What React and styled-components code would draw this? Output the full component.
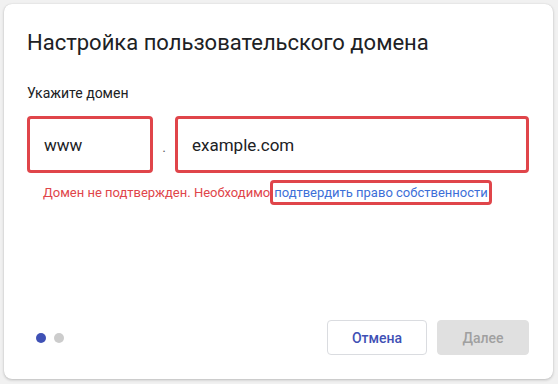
import React from 'react';
import styled, { createGlobalStyle } from 'styled-components';

const GlobalStyle = createGlobalStyle`
  html, body {
    margin: 0;
    padding: 0;
    background: #f1f1f1;
    font-family: Roboto, "Noto Sans", Arial, sans-serif;
  }
  * {
    box-sizing: border-box;
  }
`;

const Page = styled.div`
  width: 558px;
  height: 384px;
  padding: 4px 5px 5px 4px;
`;

const Card = styled.div`
  width: 549px;
  height: 375px;
  background: #fff;
  border-radius: 8px;
  box-shadow: 0 1px 3px rgba(0, 0, 0, 0.22), 0 0 1px rgba(0, 0, 0, 0.12);
  padding: 25px 24px 24px 23px;
  display: flex;
  flex-direction: column;
`;

const Title = styled.h1`
  margin: 0;
  font-size: 22px;
  line-height: 28px;
  font-weight: 400;
  color: #202124;
`;

const Label = styled.div`
  margin-top: 26px;
  font-size: 14px;
  line-height: 20px;
  color: #202124;
`;

const Fields = styled.div`
  margin-top: 13px;
  display: flex;
  align-items: center;
`;

const Field = styled.div`
  width: ${p => p.$width}px;
  flex: none;
  height: 57px;
  border: 3px solid #e0454a;
  border-radius: 4px;
  display: flex;
  align-items: center;
  padding: 0 0 0 ${p => p.$pad}px;
  font-size: 17px;
  color: #202124;
`;

const Dot = styled.span`
  width: 22px;
  text-align: center;
  font-size: 14px;
  color: #5f6368;
  padding-top: 4px;
`;

const ErrorRow = styled.div`
  margin-top: 7px;
  height: 25px;
  display: flex;
  align-items: center;
  padding-left: 16px;
  font-size: 13px;
  color: #e0454a;
`;

const Link = styled.a`
  height: 25px;
  display: flex;
  align-items: center;
  padding: 0 1px;
  border: 3px solid #e0454a;
  border-radius: 4px;
  color: #3d6fd8;
  text-decoration: none;
`;

const Footer = styled.div`
  margin-top: auto;
  display: flex;
  align-items: center;
`;

const Dots = styled.div`
  display: flex;
  gap: 8px;
  margin-left: 9px;
  flex: 1;
`;

const Step = styled.span`
  width: 10px;
  height: 10px;
  border-radius: 50%;
  background: ${p => (p.$active ? '#3f51b5' : '#cccccc')};
`;

const Button = styled.button`
  height: 35px;
  width: ${p => p.$width}px;
  margin-left: ${p => p.$gap || 0}px;
  border-radius: 4px;
  font-family: inherit;
  font-size: 14px;
  font-weight: 500;
  border: 1px solid ${p => (p.$disabled ? '#e0e0e0' : '#dadce0')};
  background: ${p => (p.$disabled ? '#e0e0e0' : '#fff')};
  color: ${p => (p.$disabled ? '#a0a0a0' : '#3f51b5')};
`;

const App = () => (
  <>
    <GlobalStyle />
    <Page>
      <Card>
        <Title>Настройка пользовательского домена</Title>
        <Label>Укажите домен</Label>
        <Fields>
          <Field $width={126} $pad={14}>www</Field>
          <Dot>.</Dot>
          <Field $width={354} $pad={14}>example.com</Field>
        </Fields>
        <ErrorRow>
          Домен не подтвержден. Необходимо
          <Link href="#">подтвердить право собственности</Link>
        </ErrorRow>
        <Footer>
          <Dots>
            <Step $active />
            <Step />
          </Dots>
          <Button $width={100}>Отмена</Button>
          <Button $width={92} $gap={10} $disabled>Далее</Button>
        </Footer>
      </Card>
    </Page>
  </>
);

export default App;
